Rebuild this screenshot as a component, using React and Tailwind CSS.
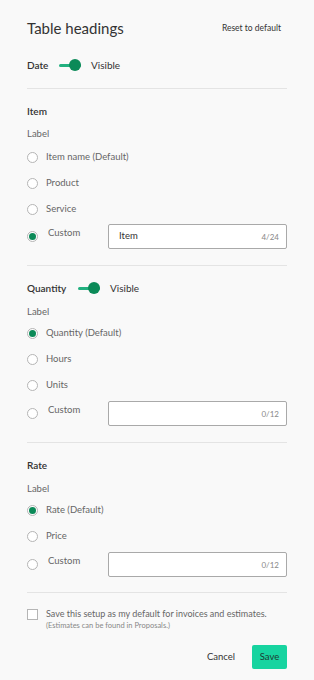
import React from "react";

const font = { fontFamily: "Lato, 'Noto Sans', sans-serif" };

function Toggle() {
  return (
    <span className="relative inline-flex h-[12px] w-[22px] items-center">
      <span className="h-[3px] w-full rounded-full bg-[#22b07f]" />
      <span className="absolute right-0 top-0 h-[12px] w-[12px] rounded-full bg-[#0b8a58]" />
    </span>
  );
}

function Radio({ checked }) {
  return (
    <span className="flex h-[11px] w-[11px] shrink-0 items-center justify-center rounded-full border border-[#b5b5b5] bg-white">
      {checked && <span className="h-[7px] w-[7px] rounded-full bg-[#0b8a58]" />}
    </span>
  );
}

function Option({ label, checked }) {
  return (
    <div className="flex h-[16px] items-center gap-[8px]">
      <Radio checked={checked} />
      <span className="text-[9.5px] text-[#666]">{label}</span>
    </div>
  );
}

function CustomRow({ value, count, checked, className }) {
  return (
    <div className={"flex items-center " + className}>
      <Radio checked={checked} />
      <span className="ml-[10px] -mt-[6px] w-[60px] text-[9.5px] text-[#666]">Custom</span>
      <div className="flex h-[25px] flex-1 items-center justify-between rounded-[2px] border border-[#a9a9a9] bg-white pl-[10px] pr-[7px]">
        <span className="text-[9.5px] text-[#333]">{value}</span>
        <span className="text-[8px] text-[#888]">{count}</span>
      </div>
    </div>
  );
}

function Divider({ className }) {
  return <div className={"h-px bg-[#e4e4e4] " + className} />;
}

export default function App() {
  return (
    <div style={font} className="min-h-[680px] w-[314px] bg-[#f9f9f9] px-[27px]">
      <div className="flex h-[24px] items-center justify-between pt-[16px] pr-[6px] box-content">
        <h1 className="text-[15px] text-[#333]">Table headings</h1>
        <button className="text-[8.5px] text-[#333]">Reset to default</button>
      </div>

      <div className="mt-[15px] flex h-[20px] items-center">
        <span className="w-[32px] text-[10px] font-semibold text-[#333]">Date</span>
        <Toggle />
        <span className="ml-[10px] text-[10px] text-[#333]">Visible</span>
      </div>

      <Divider className="mt-[13px]" />

      <div className="mt-[14px] flex h-[16px] items-center text-[10px] font-semibold text-[#333]">Item</div>
      <div className="mt-[7px] flex h-[16px] items-center text-[9.5px] text-[#666]">Label</div>
      <div className="mt-[7px] flex flex-col gap-[10px]">
        <Option label="Item name (Default)" />
        <Option label="Product" />
        <Option label="Service" />
      </div>
      <CustomRow value="Item" count="4/24" checked className="mt-[7px]" />

      <Divider className="mt-[16px]" />

      <div className="mt-[12px] flex h-[20px] items-center">
        <span className="w-[51px] text-[10px] font-semibold text-[#333]">Quantity</span>
        <Toggle />
        <span className="ml-[10px] text-[10px] text-[#333]">Visible</span>
      </div>
      <div className="mt-[6px] flex h-[16px] items-center text-[9.5px] text-[#666]">Label</div>
      <div className="mt-[5px] flex flex-col gap-[10px]">
        <Option label="Quantity (Default)" checked />
        <Option label="Hours" />
        <Option label="Units" />
      </div>
      <CustomRow value="" count="0/12" className="mt-[8px]" />

      <Divider className="mt-[16px]" />

      <div className="mt-[14px] flex h-[16px] items-center text-[10px] font-semibold text-[#333]">Rate</div>
      <div className="mt-[8px] flex h-[16px] items-center text-[9.5px] text-[#666]">Label</div>
      <div className="mt-[5px] flex flex-col gap-[10px]">
        <Option label="Rate (Default)" checked />
        <Option label="Price" />
      </div>
      <CustomRow value="" count="0/12" className="mt-[8px]" />

      <Divider className="mt-[15px]" />

      <div className="mt-[14px] flex gap-[8px]">
        <span className="mt-[2px] h-[11px] w-[11px] shrink-0 border border-[#b5b5b5] bg-white" />
        <div className="flex flex-col">
          <span className="text-[9px] leading-[13px] text-[#666]">Save this setup as my default for invoices and estimates.</span>
          <span className="mt-[1px] text-[7.5px] leading-[10px] text-[#888]">(Estimates can be found in Proposals.)</span>
        </div>
      </div>

      <div className="mt-[14px] flex items-center justify-end">
        <button className="text-[9.5px] text-[#333]">Cancel</button>
        <button className="ml-[17px] h-[24px] w-[35px] rounded-[2px] bg-[#17d4a0] text-[9.5px] text-[#1d3b33]">Save</button>
      </div>
    </div>
  );
}
